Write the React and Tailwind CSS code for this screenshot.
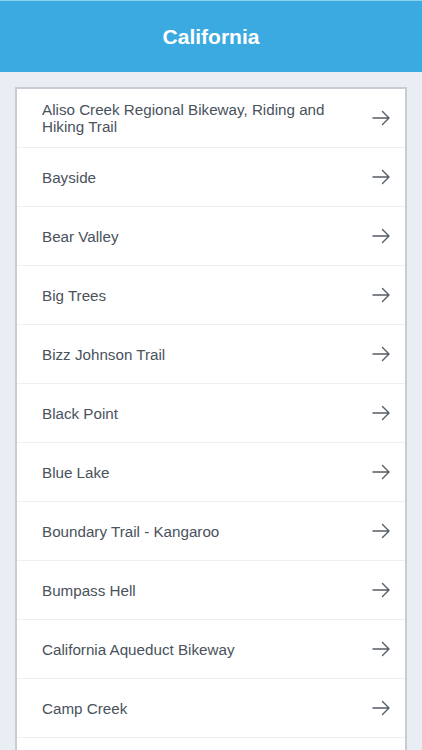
import React from 'react';

const TRAILS = [
  'Aliso Creek Regional Bikeway, Riding and Hiking Trail',
  'Bayside',
  'Bear Valley',
  'Big Trees',
  'Bizz Johnson Trail',
  'Black Point',
  'Blue Lake',
  'Boundary Trail - Kangaroo',
  'Bumpass Hell',
  'California Aqueduct Bikeway',
  'Camp Creek',
];

function Arrow() {
  return (
    <svg width="18" height="16" viewBox="0 0 18 16" fill="none" className="shrink-0">
      <path
        d="M1 8H16.5M10.5 1.5L17 8L10.5 14.5"
        stroke="#565c64"
        strokeWidth="1.4"
        strokeLinecap="round"
        strokeLinejoin="round"
      />
    </svg>
  );
}

export default function App() {
  return (
    <div
      className="h-[750px] w-[422px] overflow-hidden bg-[#e9eef5]"
      style={{ fontFamily: '"Liberation Sans", Arial, sans-serif' }}
    >
      <header className="flex h-[72px] items-center justify-center border-t border-[#8fd0f0] bg-[#3aaae1]">
        <h1 className="text-[21px] font-bold text-white">California</h1>
      </header>

      <div className="mx-[15px] mt-[15px] border-2 border-[#c9cdd3] bg-white">
        {TRAILS.map((name) => (
          <div
            key={name}
            className="flex h-[59px] items-center justify-between border-b border-[#eceff3] pl-[25px] pr-[15px]"
          >
            <span className="pr-8 text-[15.2px] leading-[17px] text-[#4a525c]">{name}</span>
            <Arrow />
          </div>
        ))}
        {/* next row continues below the fold */}
        <div className="h-[59px]" />
      </div>
    </div>
  );
}
